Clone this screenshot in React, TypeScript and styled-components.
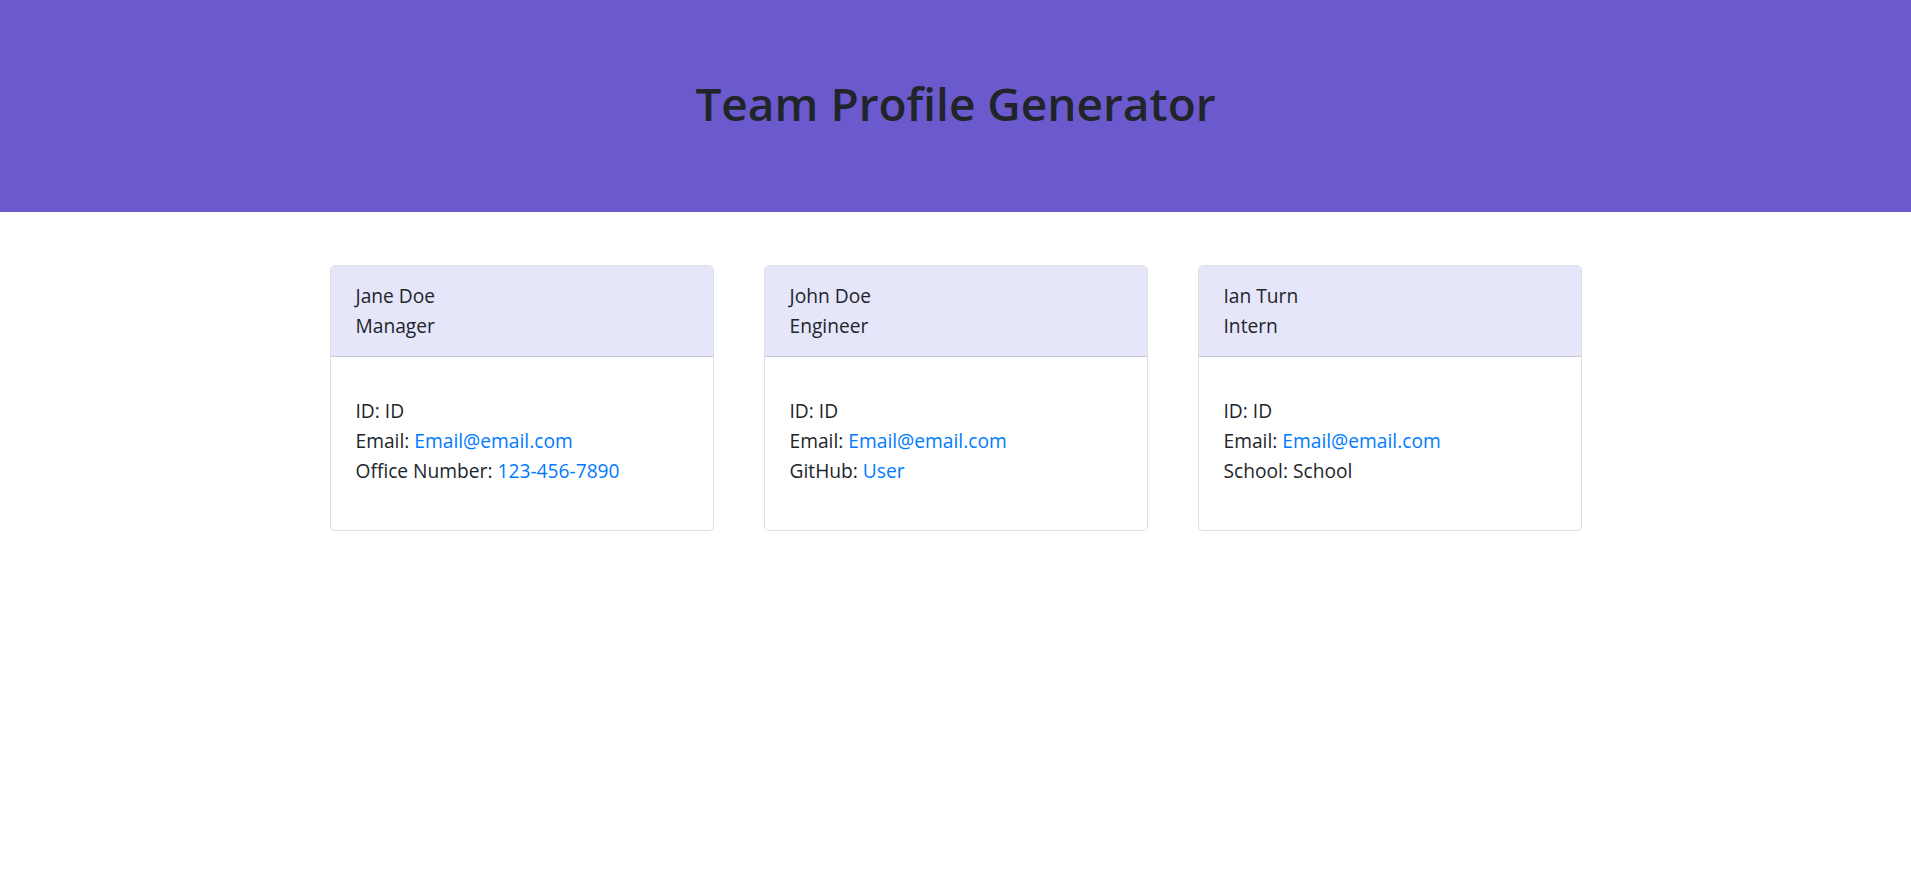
import styled, { createGlobalStyle } from "styled-components";

const GlobalStyle = createGlobalStyle`
  body {
    margin: 0;
    background: #fff;
    color: #212529;
    font-family: "Open Sans", "Noto Sans", sans-serif;
    font-size: 19.2px;
    line-height: 30px;
  }
`;

const Banner = styled.header`
  display: flex;
  align-items: center;
  justify-content: center;
  height: 212px;
  padding-bottom: 4px;
  box-sizing: border-box;
  background: #6a5acd;
`;

const Title = styled.h1`
  margin: 0;
  font-size: 46px;
  font-weight: 600;
  line-height: 1.2;
  color: #212529;
`;

const CardRow = styled.main`
  display: grid;
  grid-template-columns: repeat(3, 384px);
  gap: 50px;
  justify-content: center;
  padding-top: 53px;
`;

const Card = styled.section`
  display: flex;
  flex-direction: column;
  border: 1px solid rgba(0, 0, 0, 0.125);
  border-radius: 5px;
  overflow: hidden;
`;

const CardHeader = styled.div`
  padding: 15px 25px;
  background: #e6e6fa;
  border-bottom: 1px solid rgba(0, 0, 0, 0.125);
`;

const CardBody = styled.div`
  padding: 39px 25px 44px;
`;

const Line = styled.div`
  white-space: nowrap;
`;

const Link = styled.a`
  color: #007bff;
  text-decoration: none;
`;

interface Member {
  name: string;
  role: string;
  label: string;
  value: string;
  link: boolean;
}

const team: Member[] = [
  { name: "Jane Doe", role: "Manager", label: "Office Number", value: "123-456-7890", link: true },
  { name: "John Doe", role: "Engineer", label: "GitHub", value: "User", link: true },
  { name: "Ian Turn", role: "Intern", label: "School", value: "School", link: false },
];

function MemberCard({ name, role, label, value, link }: Member) {
  return (
    <Card>
      <CardHeader>
        <Line>{name}</Line>
        <Line>{role}</Line>
      </CardHeader>
      <CardBody>
        <Line>ID: ID</Line>
        <Line>
          Email: <Link href="#">Email@email.com</Link>
        </Line>
        <Line>
          {label}: {link ? <Link href="#">{value}</Link> : value}
        </Line>
      </CardBody>
    </Card>
  );
}

export default function App() {
  return (
    <>
      <GlobalStyle />
      <Banner>
        <Title>Team Profile Generator</Title>
      </Banner>
      <CardRow>
        {team.map((m) => (
          <MemberCard key={m.name} {...m} />
        ))}
      </CardRow>
    </>
  );
}
